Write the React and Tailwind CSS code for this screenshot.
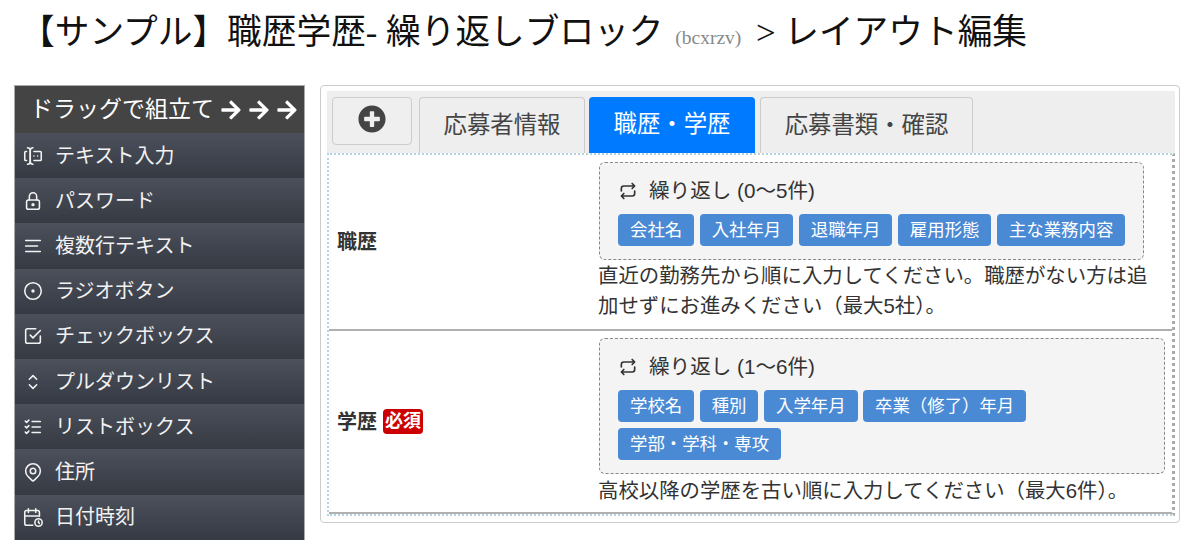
import React from 'react';
import { TbForms, TbLock, TbCircleDot, TbCheckbox, TbSelector, TbListCheck, TbMapPin, TbCalendarTime, TbRepeat } from 'react-icons/tb';
import { FaPlusCircle, FaArrowRight } from 'react-icons/fa';

const LinesIcon = ({ className }) => (
  <svg viewBox="0 0 24 24" fill="none" stroke="currentColor" strokeWidth="1.7" strokeLinecap="round" className={className}>
    <path d="M4 6h16M4 12h13M4 18h16" />
  </svg>
);

const items = [
  { icon: TbForms, label: 'テキスト入力' },
  { icon: TbLock, label: 'パスワード' },
  { icon: LinesIcon, label: '複数行テキスト' },
  { icon: TbCircleDot, label: 'ラジオボタン' },
  { icon: TbCheckbox, label: 'チェックボックス' },
  { icon: TbSelector, label: 'プルダウンリスト' },
  { icon: TbListCheck, label: 'リストボックス' },
  { icon: TbMapPin, label: '住所' },
  { icon: TbCalendarTime, label: '日付時刻' },
];

const Chip = ({ children }) => (
  <span className="h-8 flex items-center px-3 rounded bg-[#4a8ad4] text-white text-[17.4px]">{children}</span>
);

const Repeat = ({ range, chips, width }) => (
  <div className={`${width} border border-dashed border-[#888] rounded-md bg-[#f4f4f4] pl-[18px] pr-[12px] pt-[13px] pb-[13px]`}>
    <div className="flex items-center h-[30px] text-[20.6px] text-[#333] mb-[8px] whitespace-nowrap">
      <TbRepeat className="w-[20px] h-[20px] mr-[11px]" />
      繰り返し ({range})
    </div>
    <div className="flex flex-wrap gap-x-[5.5px] gap-y-[6px]">
      {chips.map((c) => <Chip key={c}>{c}</Chip>)}
    </div>
  </div>
);

export default function App() {
  return (
    <div className="w-[1200px] h-[541px] overflow-hidden bg-white text-[#333] font-['Liberation_Sans','Noto_Sans_CJK_JP',sans-serif]">
      <h1 className="h-[85px] pl-[20px] pt-[11px] text-[34.7px] leading-[44px] text-[#111] font-['Liberation_Serif','Noto_Sans_CJK_JP',serif] whitespace-nowrap">
        【サンプル】職歴学歴- 繰り返しブロック <span className="text-[19.5px] text-[#888] ml-[3px] mr-[6px]">(bcxrzv)</span> &gt; レイアウト編集
      </h1>
      <div className="flex items-start pl-[14px] pr-[20px] gap-[15px]">
        <div className="w-[291px] shrink-0 border-x border-t border-[#aaa] text-white">
          <div className="h-[47px] bg-[#444444] flex items-center pl-[15px] text-[23px] whitespace-nowrap">
            ドラッグで組立て
            <span className="flex ml-[6px] gap-[6px]">
              <FaArrowRight className="w-[22px] h-[22px]" />
              <FaArrowRight className="w-[22px] h-[22px]" />
              <FaArrowRight className="w-[22px] h-[22px]" />
            </span>
          </div>
          {items.map(({ icon: Icon, label }) => (
            <div key={label} className="h-[45.2px] flex items-center pl-[7px] bg-gradient-to-b from-[#4b505b] to-[#363a43] text-[20px] text-[#f2f2f2]">
              <Icon className="w-[22px] h-[22px] mr-[11px] shrink-0 stroke-[1.7]" />
              {label}
            </div>
          ))}
        </div>
        <div className="w-[860px] h-[438px] border border-[#ccc] rounded pt-[5px] pl-[6px]">
          <div className="w-[848px] h-[62px] bg-[#eeeeee] flex items-start pt-[6px] pl-[5px]">
            <div className="w-[80px] h-[48px] border border-[#ccc] rounded flex items-start justify-center pt-[7px] bg-[#efefef] mr-[7px]">
              <FaPlusCircle className="w-[28px] h-[28px] text-[#444]" />
            </div>
            <div className="w-[166px] h-[56px] border border-b-0 border-[#ccc] rounded-t flex items-center justify-center text-[23.4px] text-[#444] mr-[4px]">応募者情報</div>
            <div className="w-[166px] h-[56px] rounded-t bg-[#007bff] text-white flex items-center justify-center text-[23.4px] mr-[5px]">職歴・学歴</div>
            <div className="w-[213px] h-[56px] border border-b-0 border-[#ccc] rounded-t flex items-center justify-center text-[23.4px] text-[#444]">応募書類・確認</div>
          </div>
          <div className="w-[848px] border-2 border-r-[3px] border-dotted border-[#b4d4e4] border-r-[#aaaaaa]">
            <div className="h-[176px] flex border-b-2 border-[#b0b0b0]">
              <div className="w-[270px] pl-[8px] flex items-center font-bold text-[20px]">職歴</div>
              <div className="pt-[7px]">
                <Repeat range="0〜5件" width="w-[545px]" chips={['会社名', '入社年月', '退職年月', '雇用形態', '主な業務内容']} />
                <p className="w-[555px] -ml-[1px] text-[20.4px] leading-[30px] mt-[1px]">直近の勤務先から順に入力してください。職歴がない方は追加せずにお進みください（最大5社）。</p>
              </div>
            </div>
            <div className="h-[183px] flex border-b-2 border-[#b0b0b0]">
              <div className="w-[270px] pl-[8px] flex items-center font-bold text-[20px]">
                学歴
                <span className="ml-[6px] h-[25px] px-[2px] flex items-center rounded-sm bg-[#cc0000] text-white text-[18px]">必須</span>
              </div>
              <div className="pt-[7px]">
                <Repeat range="1〜6件" width="w-[566px]" chips={['学校名', '種別', '入学年月', '卒業（修了）年月', '学部・学科・専攻']} />
                <p className="-ml-[1px] text-[20.4px] leading-[30px] mt-[2px]">高校以降の学歴を古い順に入力してください（最大6件）。</p>
              </div>
            </div>
          </div>
        </div>
      </div>
    </div>
  );
}
